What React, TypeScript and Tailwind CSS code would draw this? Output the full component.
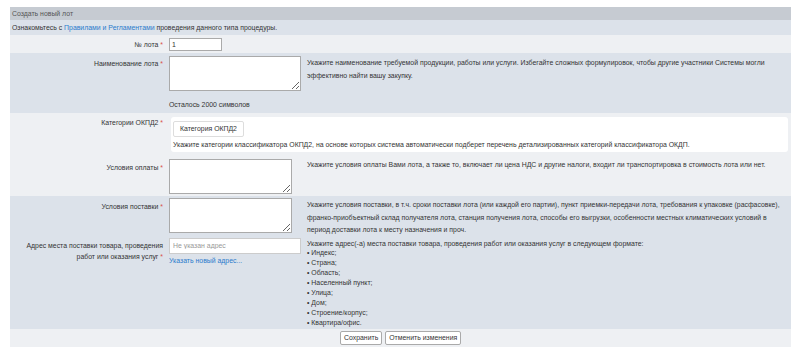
const Star = () => <span className="text-[#d9534f]"> *</span>;

const Label = ({ children, top = "pt-[4px]" }: { children: React.ReactNode; top?: string }) => (
  <div className={`w-[155px] shrink-0 pr-[2px] text-right leading-[11px] ${top}`}>{children}</div>
);

const Area = ({ w }: { w: string }) => (
  <textarea className={`${w} h-[35px] resize border border-[#aaa] bg-white block`} />
);

export default function App() {
  const addr = [
    "Индекс;",
    "Страна;",
    "Область;",
    "Населенный пункт;",
    "Улица;",
    "Дом;",
    "Строение/корпус;",
    "Квартира/офис.",
  ];
  return (
    <div className="min-h-[355px] bg-white pt-[7px] pl-[10px] pr-[9px] text-[6.9px] text-[#333] font-['Liberation_Sans',Arial,sans-serif]">
      <div className="bg-[#c6cbd2] h-[13px] pl-[2px] leading-[13px] text-[#555]">Создать новый лот</div>
      <div className="bg-[#dce2ea] h-[15px] pl-[2px] leading-[15px]">
        Ознакомьтесь с <a className="text-[#2a7bcc]">Правилами и Регламентами</a> проведения данного типа процедуры.
      </div>

      <div className="bg-[#eef0f3] h-[18px] flex">
        <Label top="pt-[4px]">
          № лота<Star />
        </Label>
        <div className="ml-[4px] pt-[3px]">
          <input defaultValue="1" className="w-[53px] h-[13px] border border-[#aaa] bg-white px-[2px] text-[6.9px] block" />
        </div>
      </div>

      <div className="bg-[#dce2ea] h-[60px] flex">
        <Label top="pt-[5px]">
          Наименование лота<Star />
        </Label>
        <div className="ml-[4px] pt-[3px] flex-1">
          <div className="grid grid-cols-[138px_1fr]">
            <Area w="w-[132px]" />
            <div className="leading-[12.5px] pt-[1px] pr-[4px]">
              Укажите наименование требуемой продукции, работы или услуги. Избегайте сложных формулировок, чтобы другие участники Системы могли эффективно найти вашу закупку.
            </div>
          </div>
          <div className="mt-[9px] leading-[10px]">Осталось 2000 символов</div>
        </div>
      </div>

      <div className="bg-[#eef0f3] h-[83px] flex flex-col">
        <div className="flex">
          <Label top="pt-[4px]">
            Категории ОКПД2<Star />
          </Label>
          <div className="ml-[6px] mt-[4px] mr-[3px] flex-1 bg-white rounded-[3px] h-[35px] pl-[2px] pt-[4px]">
            <button className="h-[16px] px-[6px] border border-[#ddd] rounded-[2px] bg-white text-[6.9px] leading-[14px]">
              Категория ОКПД2
            </button>
            <div className="mt-[3px] leading-[10px]">
              Укажите категории классификатора ОКПД2, на основе которых система автоматически подберет перечень детализированных категорий классификатора ОКДП.
            </div>
          </div>
        </div>
        <div className="flex mt-[7px]">
          <Label top="pt-[3px]">
            Условия оплаты<Star />
          </Label>
          <div className="ml-[4px] flex-1 grid grid-cols-[138px_1fr]">
            <Area w="w-[123px]" />
            <div className="leading-[12.5px] pr-[4px]">
              Укажите условия оплаты Вами лота, а также то, включает ли цена НДС и другие налоги, входит ли транспортировка в стоимость лота или нет.
            </div>
          </div>
        </div>
      </div>

      <div className="bg-[#dce2ea] h-[133px] flex flex-col">
        <div className="flex mt-[2px]">
          <Label top="pt-[3px]">
            Условия поставки<Star />
          </Label>
          <div className="ml-[4px] flex-1 grid grid-cols-[138px_1fr]">
            <Area w="w-[123px]" />
            <div className="leading-[12.5px] pt-[1px] pr-[4px]">
              Укажите условия поставки, в т.ч. сроки поставки лота (или каждой его партии), пункт приемки-передачи лота, требования к упаковке (расфасовке), франко-приобъектный склад получателя лота, станция получения лота, способы его выгрузки, особенности местных климатических условий в период доставки лота к месту назначения и проч.
            </div>
          </div>
        </div>
        <div className="flex mt-[1px]">
          <Label top="pt-[2px]">
            Адрес места поставки товара, проведения работ или оказания услуг<Star />
          </Label>
          <div className="ml-[4px] flex-1 grid grid-cols-[138px_1fr]">
            <div>
              <input
                placeholder="Не указан адрес"
                className="w-[132px] h-[16px] border border-[#ccc] bg-white px-[3px] text-[6.9px] block placeholder:text-[#999]"
              />
              <a className="block mt-[2px] text-[#2a7bcc] leading-[10px]">Указать новый адрес...</a>
            </div>
            <div className="leading-[9.9px] pt-[1px]">
              <div>Укажите адрес(-а) места поставки товара, проведения работ или оказания услуг в следующем формате:</div>
              {addr.map((a) => (
                <div key={a}>• {a}</div>
              ))}
            </div>
          </div>
        </div>
      </div>

      <div className="bg-[#eef0f3] h-[18px] flex items-center gap-[3px] pl-[330px]">
        <button className="h-[14px] px-[3px] border border-[#aaa] rounded-[2px] bg-white text-[6.9px] leading-[12px]">Сохранить</button>
        <button className="h-[14px] px-[3px] border border-[#aaa] rounded-[2px] bg-white text-[6.9px] leading-[12px]">Отменить изменения</button>
      </div>
    </div>
  );
}
